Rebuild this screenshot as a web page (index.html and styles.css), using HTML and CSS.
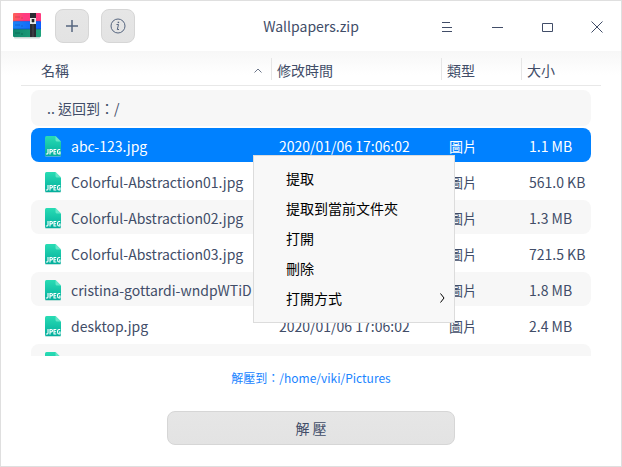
FILE: index.html
```
<!DOCTYPE html>
<html lang="zh-Hant">
<head>
<meta charset="utf-8">
<meta name="viewport" content="width=device-width, initial-scale=1">
<title>Wallpapers.zip</title>
<link rel="stylesheet" href="styles.css">
</head>
<body>
<svg class="defs" aria-hidden="true">
  <defs>
    <linearGradient id="leaf" x1="0" y1="0" x2="0" y2="1">
      <stop offset="0" stop-color="#29dcb4"/>
      <stop offset="1" stop-color="#02ae9c"/>
    </linearGradient>
    <linearGradient id="red" x1="0" y1="0" x2="1" y2="0">
      <stop offset="0" stop-color="#ff6258"/>
      <stop offset=".4" stop-color="#ff3b80"/>
    </linearGradient>
    <linearGradient id="blue" x1="0" y1="0" x2="1" y2="0">
      <stop offset="0" stop-color="#1d84f5"/>
      <stop offset="1" stop-color="#0a5cff"/>
    </linearGradient>
    <linearGradient id="green" x1="0" y1="0" x2="1" y2="0">
      <stop offset="0" stop-color="#12886c"/>
      <stop offset="1" stop-color="#1fa27c"/>
    </linearGradient>
    <symbol id="jpeg" viewBox="0 0 16 21">
      <path d="M0 18v1.500q0 1.500 1.500 1.500h13q1.500 0 1.500-1.500V18z" fill="#8ccfc4" opacity=".55"/>
      <path d="M1.500 0H10.500L16 5.500V18.500Q16 20 14.500 20H1.500Q0 20 0 18.500V1.500Q0 0 1.500 0z" fill="url(#leaf)"/>
      <path d="M10.500 0L16 5.500H12Q10.500 5.500 10.500 4z" fill="#7aecd0" opacity=".75"/>
      <g fill="none" stroke="#fff" stroke-width="1.100">
        <path d="M3 13v4q0 1-1 1H.800"/>
        <path d="M5 18.500V13.500h1.300q1.200 0 1.200 1.200t-1.200 1.200H5"/>
        <path d="M11.300 13.500H9v4.500h2.300M9 15.700h2.100"/>
        <path d="M15.200 13.500H14q-1.500 0-1.500 2.200t1.500 2.300h1v-2h-1"/>
      </g>
    </symbol>
  </defs>
</svg>

<main class="window">
  <header class="titlebar">
    <div class="tools">
      <svg class="logo" viewBox="0 0 28 26" role="img" aria-label="Archive Manager">
        <path d="M1 24h26v.800q0 .700-1 .700H2q-1 0-1-.700z" fill="#c8d8d4"/>
        <rect y="0" width="28" height="9" rx="1" fill="url(#red)"/>
        <rect y="8" width="28" height="9" rx="1" fill="url(#blue)"/>
        <rect y="16" width="28" height="8" rx="1" fill="url(#green)"/>
        <path d="M0 7.500h28v1H0z" fill="#b32063" opacity=".4"/>
        <path d="M0 15.500h28v1H0z" fill="#0648ae" opacity=".6"/>
        <path d="M2 4h5M8 5h2" stroke="#c83e4e" stroke-width="1" opacity=".7"/>
        <path d="M2 12h5M8 13h2" stroke="#1661d0" stroke-width="1"/>
        <path d="M2 20h5M8 21h2" stroke="#0d6e58" stroke-width="1"/>
        <rect x="17" width="6" height="24" fill="#292b32"/>
        <path d="M20 10v14" stroke="#4c4d53" stroke-width="1"/>
        <rect x="17" y="5" width="6" height="6" fill="#e8e8e8"/>
        <path d="M19 6v3h2V6" fill="#222" stroke="#222" stroke-width=".6"/>
      </svg>
      <button class="tool" type="button" aria-label="新增">
        <svg viewBox="0 0 16 16"><path d="M8 2v12M2 8h12" stroke-width="1.500"/></svg>
      </button>
      <button class="tool" type="button" aria-label="資訊">
        <svg viewBox="0 0 16 16"><circle cx="8" cy="8" r="7"/><path d="M6.500 6.500h2L7.300 11.500h1.700"/><path d="M8.400 3.700v1.400" stroke-width="1.500"/></svg>
      </button>
    </div>
    <h1 class="title">Wallpapers.zip</h1>
    <div class="controls">
      <button class="control" type="button" aria-label="選單"><svg viewBox="0 0 12 12"><path d="M1 1.500h8M1 6.500h10M1 10.500h10"/></svg></button>
      <button class="control" type="button" aria-label="最小化"><svg viewBox="0 0 12 12"><path d="M1 6.500h11"/></svg></button>
      <button class="control" type="button" aria-label="最大化"><svg viewBox="0 0 12 12"><path d="M1.500 2.500h10v8h-10z"/></svg></button>
      <button class="control" type="button" aria-label="關閉"><svg viewBox="0 0 12 12"><path d="M.5.500l11 11M11.500.500l-11 11"/></svg></button>
    </div>
  </header>

  <div class="list">
    <table class="files">
      <thead>
        <tr>
          <th scope="col">名稱<svg class="sort" viewBox="0 0 8 5"><path d="M.5 4.500L4 1l3.500 3.500"/></svg></th>
          <th scope="col">修改時間</th>
          <th scope="col">類型</th>
          <th scope="col">大小</th>
        </tr>
      </thead>
      <tbody>
        <tr class="parent"><td colspan="4">.. 返回到：/</td></tr>
        <tr class="selected"><td><svg class="icon"><use href="#jpeg"/></svg><span>abc-123.jpg</span></td><td>2020/01/06 17:06:02</td><td>圖片</td><td>1.1 MB</td></tr>
        <tr><td><svg class="icon"><use href="#jpeg"/></svg><span>Colorful-Abstraction01.jpg</span></td><td>2020/01/06 17:06:02</td><td>圖片</td><td>561.0 KB</td></tr>
        <tr class="striped"><td><svg class="icon"><use href="#jpeg"/></svg><span>Colorful-Abstraction02.jpg</span></td><td>2020/01/06 17:06:02</td><td>圖片</td><td>1.3 MB</td></tr>
        <tr><td><svg class="icon"><use href="#jpeg"/></svg><span>Colorful-Abstraction03.jpg</span></td><td>2020/01/06 17:06:02</td><td>圖片</td><td>721.5 KB</td></tr>
        <tr class="striped"><td><svg class="icon"><use href="#jpeg"/></svg><span>cristina-gottardi-wndpWTiD…</span></td><td>2020/01/06 17:06:02</td><td>圖片</td><td>1.8 MB</td></tr>
        <tr><td><svg class="icon"><use href="#jpeg"/></svg><span>desktop.jpg</span></td><td>2020/01/06 17:06:02</td><td>圖片</td><td>2.4 MB</td></tr>
        <tr class="striped"><td><svg class="icon"><use href="#jpeg"/></svg></td><td></td><td>圖片</td><td></td></tr>
      </tbody>
    </table>
  </div>

  <footer class="footer">
    <a class="target" href="#">解壓到：/home/viki/Pictures</a>
    <button class="extract" type="button">解 壓</button>
  </footer>

  <div class="menu" role="menu">
    <button type="button" role="menuitem">提取</button>
    <button type="button" role="menuitem">提取到當前文件夾</button>
    <button type="button" role="menuitem">打開</button>
    <button type="button" role="menuitem">刪除</button>
    <button type="button" role="menuitem">打開方式<svg viewBox="0 0 5 10"><path d="M.5.500L4 5 .5 9.500"/></svg></button>
  </div>
</main>
</body>
</html>
```
FILE: styles.css
```
* {
  box-sizing: border-box;
}

body {
  margin: 0;
  background: #fff;
  color: #414d68;
  font: 14px/20px "Noto Sans CJK SC", "Noto Sans CJK TC", sans-serif;
}

button {
  margin: 0;
  padding: 0;
  border: 0;
  background: none;
  color: inherit;
  font: inherit;
}

svg {
  display: block;
  fill: none;
  stroke: none;
}

.defs {
  position: absolute;
  width: 0;
  height: 0;
}

.window {
  position: relative;
  display: flex;
  flex-direction: column;
  height: 100vh;
  border: 1px solid #dfdfdf;
}

.titlebar {
  display: grid;
  grid-template-columns: 1fr auto 1fr;
  align-items: center;
  height: 50px;
}

.tools {
  display: flex;
  align-items: center;
  gap: 12px;
  padding-left: 12px;
}

.logo {
  width: 28px;
  height: 26px;
  margin-right: 2px;
}

.tool,
.extract {
  height: 34px;
  border: 1px solid #d6d6d6;
  border-radius: 8px;
  background: linear-gradient(#e6e6e6, #e3e3e3);
}

.tool {
  display: grid;
  place-items: center;
  width: 34px;
}

.tool svg {
  width: 16px;
  height: 16px;
  stroke: #56657f;
}

.title {
  margin: 0;
  font-size: 14px;
  font-weight: 400;
}

.controls {
  display: flex;
  justify-content: flex-end;
}

.control {
  display: grid;
  place-items: center;
  width: 50px;
  height: 50px;
  padding: 2px 0 0 2px;
}

.control svg {
  width: 12px;
  height: 12px;
  stroke: #414d68;
}

.list {
  flex: 1;
  min-height: 0;
  overflow: hidden;
  padding: 0 20px;
  background: linear-gradient(#f7f7f7, #fff 24px);
}

.files,
.files thead,
.files tbody {
  display: block;
}

.files tr {
  display: grid;
  grid-template-columns: minmax(0, 1fr) 170px 80px 70px;
  align-items: center;
}

.files thead tr {
  grid-template-columns: minmax(0, 1fr) 170px 80px 80px;
  height: 35px;
  padding-top: 2px;
  border-bottom: 1px solid #e8e8e8;
}

.files th {
  height: 22px;
  padding: 2px 0 0 5px;
  border-left: 1px solid #e6e6e6;
  font-weight: 400;
  text-align: left;
}

.files th:first-child {
  display: flex;
  align-items: center;
  justify-content: space-between;
  padding: 2px 9px 0 20px;
  border: 0;
}

.sort {
  width: 8px;
  height: 5px;
  stroke: #6b7589;
}

.files tbody {
  padding: 4px 10px 0;
}

.files tbody tr {
  height: 34px;
  margin-bottom: 2px;
  border-radius: 8px;
}

.files td {
  padding: 2px 0 0 8px;
  white-space: nowrap;
}

.files td:first-child {
  display: flex;
  align-items: center;
  gap: 10px;
  padding-left: 14px;
}

.files .striped,
.files .parent {
  background: #f7f7f7;
}

.files tbody .parent {
  grid-template-columns: 1fr;
  height: 36px;
}

.files .parent td:first-child {
  padding: 0 0 0 16px;
}

.files .selected {
  background: #0081ff;
  color: #fff;
}

.icon {
  width: 16px;
  height: 21px;
}

.footer {
  display: flex;
  flex-direction: column;
  align-items: center;
  gap: 23px;
  padding: 12px 20px 21px;
}

.target {
  color: #1a84ff;
  font-size: 12px;
  text-decoration: none;
}

.extract {
  width: 288px;
}

.menu {
  position: absolute;
  top: 154px;
  left: 252px;
  width: 202px;
  padding: 7px 0 9px;
  border: 1px solid #dcdcdc;
  background: #f8f8f8;
  color: #000;
}

.menu button {
  display: flex;
  align-items: center;
  justify-content: space-between;
  width: 100%;
  height: 30px;
  padding: 0 9px 0 32px;
}

.menu svg {
  width: 5px;
  height: 10px;
  stroke: #000;
}
```
